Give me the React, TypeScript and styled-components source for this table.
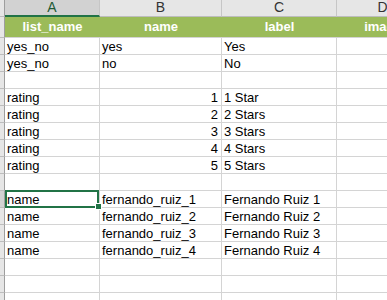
import React from 'react';
import styled, { createGlobalStyle } from 'styled-components';

const GlobalStyle = createGlobalStyle`
  html, body {
    margin: 0;
    padding: 0;
    background: #fff;
  }
  body {
    font-family: "Liberation Sans", Arial, sans-serif;
    overflow: hidden;
  }
`;

const Viewport = styled.div`
  width: 387px;
  height: 300px;
  overflow: hidden;
  background: #fff;
`;

const Sheet = styled.div`
  display: grid;
  grid-template-columns: 5px 95px 122px 115px 92px;
  grid-template-rows: 17px 21px;
  grid-auto-rows: 17px;
  width: max-content;
`;

const Corner = styled.div`
  background: #e6e6e6;
  border-right: 1px solid #9e9e9e;
  border-bottom: 1px solid #bdbdbd;
  box-sizing: border-box;
`;

const ColHeader = styled.div<{ $selected?: boolean }>`
  box-sizing: border-box;
  background: ${(p) => (p.$selected ? '#d2d2d2' : '#e6e6e6')};
  border-right: 1px solid #c6c6c6;
  border-bottom: ${(p) => (p.$selected ? '2px solid #217346' : '1px solid #bdbdbd')};
  color: ${(p) => (p.$selected ? '#1e5a35' : '#333')};
  font-size: 14px;
  line-height: 15px;
  text-align: center;
`;

const RowHeader = styled.div<{ $selected?: boolean }>`
  box-sizing: border-box;
  background: ${(p) => (p.$selected ? '#d2d2d2' : '#e6e6e6')};
  border-right: 1px solid #9e9e9e;
  border-bottom: 1px solid #bdbdbd;
`;

const TitleCell = styled.div`
  box-sizing: border-box;
  background: #9bbb59;
  border-bottom: 1px solid #d4d4d4;
  color: #fff;
  font-weight: bold;
  font-size: 13px;
  line-height: 20px;
  text-align: center;
  white-space: nowrap;
  overflow: hidden;
`;

const Cell = styled.div<{ $align?: 'left' | 'right' }>`
  position: relative;
  box-sizing: border-box;
  border-right: 1px solid #d4d4d4;
  border-bottom: 1px solid #d4d4d4;
  padding: 0 ${(p) => (p.$align === 'right' ? '3px' : '2px')};
  text-align: ${(p) => p.$align || 'left'};
  color: #000;
  font-size: 13px;
  line-height: 17px;
  white-space: nowrap;
`;

const Selection = styled.div`
  position: absolute;
  top: -1px;
  bottom: -1px;
  left: 0;
  right: 0;
  border: 2px solid #217346;
  z-index: 2;
  pointer-events: none;
`;

const Handle = styled.div`
  position: absolute;
  right: -4px;
  bottom: -3px;
  width: 5px;
  height: 5px;
  background: #217346;
  box-shadow: 0 0 0 1px #fff;
`;

type Row = [string, string | number, string, string?];

const columns = ['A', 'B', 'C', 'D'];
const titles = ['list_name', 'name', 'label', 'image'];

const rows: Row[] = [
  ['yes_no', 'yes', 'Yes'],
  ['yes_no', 'no', 'No'],
  ['', '', ''],
  ['rating', 1, '1 Star'],
  ['rating', 2, '2 Stars'],
  ['rating', 3, '3 Stars'],
  ['rating', 4, '4 Stars'],
  ['rating', 5, '5 Stars'],
  ['', '', ''],
  ['name', 'fernando_ruiz_1', 'Fernando Ruiz 1'],
  ['name', 'fernando_ruiz_2', 'Fernando Ruiz 2'],
  ['name', 'fernando_ruiz_3', 'Fernando Ruiz 3'],
  ['name', 'fernando_ruiz_4', 'Fernando Ruiz 4'],
  ['', '', ''],
  ['', '', ''],
  ['', '', ''],
];

const selectedRow = 9;

const App = () => {
  return (
    <Viewport>
      <GlobalStyle />
      <Sheet>
        <Corner />
        {columns.map((c) => (
          <ColHeader key={c} $selected={c === 'A'}>
            {c}
          </ColHeader>
        ))}

        <RowHeader />
        {titles.map((t) => (
          <TitleCell key={t}>{t}</TitleCell>
        ))}

        {rows.map((row, i) => (
          <React.Fragment key={i}>
            <RowHeader $selected={i === selectedRow} />
            <Cell>
              {row[0]}
              {i === selectedRow && (
                <Selection>
                  <Handle />
                </Selection>
              )}
            </Cell>
            <Cell $align={typeof row[1] === 'number' ? 'right' : 'left'}>{row[1]}</Cell>
            <Cell>{row[2]}</Cell>
            <Cell>{row[3] || ''}</Cell>
          </React.Fragment>
        ))}
      </Sheet>
    </Viewport>
  );
};

export default App;
